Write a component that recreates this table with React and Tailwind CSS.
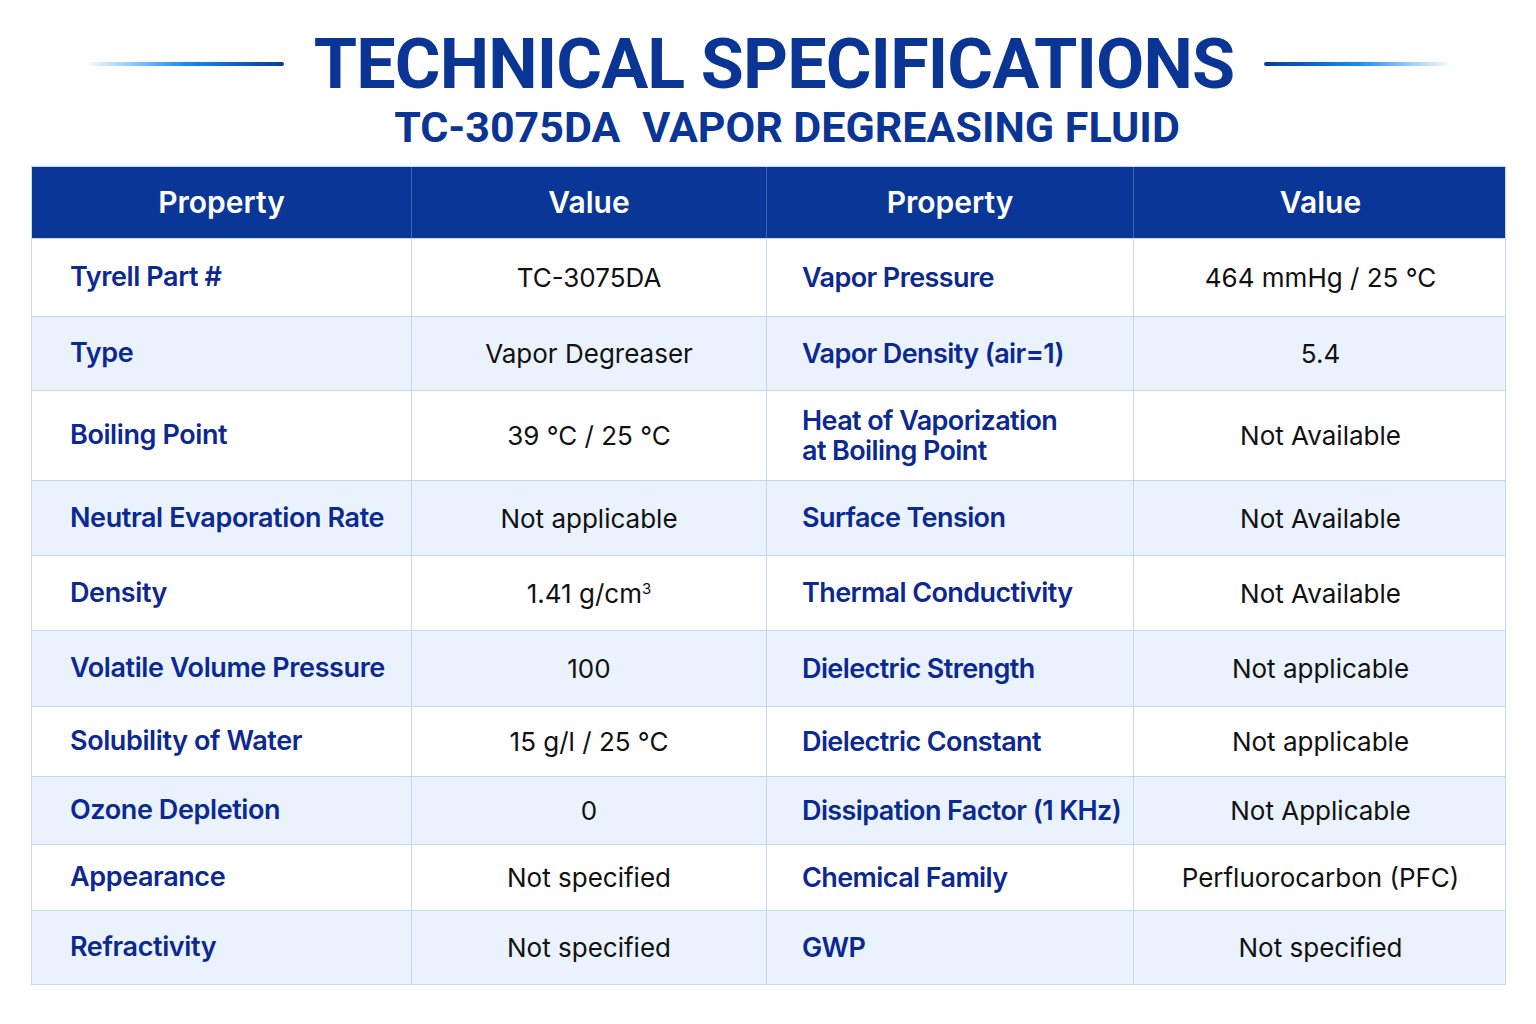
import React from "react";

const rows = [
  { h: "h-[78px]", a: "Tyrell Part #", b: "TC-3075DA", c: "Vapor Pressure", d: "464 mmHg / 25 °C" },
  { h: "h-[74px]", a: "Type", b: "Vapor Degreaser", c: "Vapor Density (air=1)", d: "5.4" },
  { h: "h-[90px]", a: "Boiling Point", b: "39 °C / 25 °C", c: (<>Heat of Vaporization<br />at Boiling Point</>), d: "Not Available" },
  { h: "h-[75px]", a: "Neutral Evaporation Rate", b: "Not applicable", c: "Surface Tension", d: "Not Available" },
  { h: "h-[75px]", a: "Density", b: (<>1.41 g/cm<span className="text-[15px] self-start mt-[22px]">3</span></>), c: "Thermal Conductivity", d: "Not Available" },
  { h: "h-[76px]", a: "Volatile Volume Pressure", b: "100", c: "Dielectric Strength", d: "Not applicable" },
  { h: "h-[70px]", a: "Solubility of Water", b: "15 g/l / 25 °C", c: "Dielectric Constant", d: "Not applicable" },
  { h: "h-[68px]", a: "Ozone Depletion", b: "0", c: "Dissipation Factor (1 KHz)", d: "Not Applicable" },
  { h: "h-[66px]", a: "Appearance", b: "Not specified", c: "Chemical Family", d: "Perfluorocarbon (PFC)" },
  { h: "h-[74px]", a: "Refractivity", b: "Not specified", c: "GWP", d: "Not specified" },
];

export default function App() {
  return (
    <div className="w-[1536px] h-[1024px] bg-white overflow-hidden" style={{ fontFamily: "Inter, 'Noto Sans', sans-serif" }}>
      <div className="pt-[25px] flex flex-col items-center">
        <div className="flex items-center gap-[30px]">
          <div className="w-[200px] h-[4px] rounded-full bg-gradient-to-r from-[#ffffff00] via-[#1a8cf5] to-[#0b3a9c]" />
          <h1 className="text-[70px] leading-[78px] font-bold text-[#0b3595] tracking-[-0.9px]" style={{ fontFamily: "Roboto, 'Liberation Sans', sans-serif" }}>
            TECHNICAL SPECIFICATIONS
          </h1>
          <div className="w-[188px] h-[4px] rounded-full bg-gradient-to-r from-[#0b3a9c] via-[#1a8cf5] to-[#ffffff00]" />
        </div>
        <h2 className="mt-[1px] pl-[38px] text-[43px] leading-[46px] font-bold text-[#0b3595] tracking-[0px]" style={{ fontFamily: "Roboto, 'Liberation Sans', sans-serif" }}>
          TC-3075DA<span className="inline-block w-[22px]" />VAPOR DEGREASING FLUID
        </h2>
      </div>

      <div className="ml-[31px] mt-[16px] w-[1475px] border border-[#c3d9f3]">
        <div className="grid grid-cols-[380px_355px_367px_373px] h-[71px] bg-[#0a3797] text-white text-[30px] font-semibold">
          <div className="flex items-center justify-center border-r border-[#3c64b4]">Property</div>
          <div className="flex items-center justify-center border-r border-[#3c64b4]">Value</div>
          <div className="flex items-center justify-center border-r border-[#3c64b4]">Property</div>
          <div className="flex items-center justify-center">Value</div>
        </div>
        {rows.map((r, i) => (
          <div
            key={i}
            className={`grid grid-cols-[380px_355px_367px_373px] ${r.h} ${i % 2 === 1 ? "bg-[#eaf3fd]" : "bg-white"} border-t border-[#c3d9f3] text-[26px]`}
          >
            <div className="flex items-center pl-[38px] border-r border-[#c3d9f3] font-semibold text-[27px] text-[#0c2891] tracking-[-0.4px]">{r.a}</div>
            <div className="flex items-center justify-center border-r border-[#c3d9f3] text-[#111]">{r.b}</div>
            <div className="flex items-center pl-[35px] border-r border-[#c3d9f3] font-semibold text-[27px] text-[#0c2891] leading-[30px] tracking-[-0.6px]">{r.c}</div>
            <div className="flex items-center justify-center text-[#111]">{r.d}</div>
          </div>
        ))}
      </div>
    </div>
  );
}
